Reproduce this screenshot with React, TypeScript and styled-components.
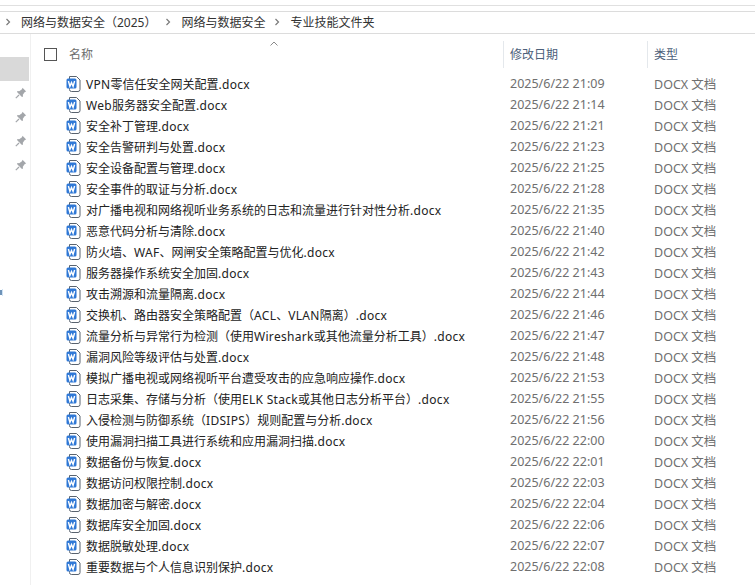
import styled, { createGlobalStyle } from 'styled-components';

const GlobalStyle = createGlobalStyle`
  html, body {
    margin: 0;
    padding: 0;
    background: #fff;
  }
  body {
    width: 755px;
    height: 585px;
    overflow: hidden;
    font-family: "Noto Sans", "Noto Sans CJK SC", sans-serif;
  }
`;

const Window = styled.div`
  width: 755px;
  height: 585px;
  display: flex;
  flex-direction: column;
  overflow: hidden;
  background: #fff;
`;

const TopStrip = styled.div`
  height: 5px;
  border-bottom: 1px solid #e0e0e0;
`;

const Gap = styled.div`
  height: 5px;
`;

const AddressBar = styled.div`
  height: 19px;
  border-top: 1px solid #dcdcdc;
  border-bottom: 1px solid #dcdcdc;
  display: flex;
  align-items: center;
  padding: 0 0 2px 5px;
  font-size: 12px;
  color: #333;
`;

const Crumb = styled.span<{ $gap: number }>`
  margin-left: ${(p) => p.$gap}px;
  white-space: nowrap;
`;

const Chevron = styled.svg<{ $gap: number }>`
  width: 6px;
  height: 8px;
  margin-left: ${(p) => p.$gap}px;
  flex: none;
`;

const Body = styled.div`
  flex: 1;
  display: flex;
  min-height: 0;
`;

const Sidebar = styled.div`
  position: relative;
  width: 31px;
  flex: none;
  border-right: 1px solid #f0f0f0;
  padding-top: 23px;
  display: flex;
  flex-direction: column;
  align-items: flex-end;
  box-sizing: border-box;
`;

const Selected = styled.div`
  width: 29px;
  height: 24px;
  margin-right: 1px;
  background: #d9d9d9;
  flex: none;
`;

const PinList = styled.div`
  display: flex;
  flex-direction: column;
  gap: 12px;
  margin-right: 3px;
  margin-top: 6px;
`;

const PinIcon = styled.svg`
  width: 12px;
  height: 12px;
  display: block;
`;

const EdgeIcon = styled.svg`
  position: absolute;
  left: 0;
  top: 255px;
  width: 4px;
  height: 8px;
`;

const Main = styled.div`
  flex: 1;
  min-width: 0;
  position: relative;
`;

const SortArrow = styled.svg`
  position: absolute;
  left: 239px;
  top: 7px;
  width: 8px;
  height: 5px;
`;

const HeaderRow = styled.div`
  height: 34px;
  display: grid;
  grid-template-columns: 472px 144px 1fr;
  align-items: stretch;
  padding-top: 7px;
  box-sizing: border-box;
  font-size: 12px;
  color: #4c607a;
`;

const NameHead = styled.div`
  display: flex;
  align-items: center;
  padding-left: 13px;
  margin-bottom: 1px;
  color: #6d6d6d;
`;

const Checkbox = styled.span`
  width: 11px;
  height: 11px;
  border: 1px solid #555;
  margin-right: 12px;
  flex: none;
`;

const ColumnHead = styled.div`
  display: flex;
  align-items: center;
  border-left: 1px solid #e4e8ec;
  padding: 0 0 2px 6px;
`;

const FileList = styled.div`
  padding-top: 5px;
`;

const Row = styled.div`
  height: 21px;
  display: grid;
  grid-template-columns: 472px 144px 1fr;
  align-items: center;
`;

const NameCell = styled.div`
  display: flex;
  align-items: center;
  padding-left: 35px;
  font-size: 12px;
  color: #222;
  white-space: nowrap;
`;

const WordSvg = styled.svg`
  flex: none;
  width: 15px;
  height: 16px;
`;

const FileName = styled.span`
  margin-left: 5px;
`;

const LatinRun = styled.span`
  letter-spacing: 0.3px;
`;

const DetailCell = styled.div`
  padding-left: 7px;
  font-size: 12.5px;
  color: #6f6f6f;
  white-space: nowrap;
`;

const files: [string, string][] = [
  ['VPN零信任安全网关配置.docx', '21:09'],
  ['Web服务器安全配置.docx', '21:14'],
  ['安全补丁管理.docx', '21:21'],
  ['安全告警研判与处置.docx', '21:23'],
  ['安全设备配置与管理.docx', '21:25'],
  ['安全事件的取证与分析.docx', '21:28'],
  ['对广播电视和网络视听业务系统的日志和流量进行针对性分析.docx', '21:35'],
  ['恶意代码分析与清除.docx', '21:40'],
  ['防火墙、WAF、网闸安全策略配置与优化.docx', '21:42'],
  ['服务器操作系统安全加固.docx', '21:43'],
  ['攻击溯源和流量隔离.docx', '21:44'],
  ['交换机、路由器安全策略配置（ACL、VLAN隔离）.docx', '21:46'],
  ['流量分析与异常行为检测（使用Wireshark或其他流量分析工具）.docx', '21:47'],
  ['漏洞风险等级评估与处置.docx', '21:48'],
  ['模拟广播电视或网络视听平台遭受攻击的应急响应操作.docx', '21:53'],
  ['日志采集、存储与分析（使用ELK Stack或其他日志分析平台）.docx', '21:55'],
  ['入侵检测与防御系统（IDSIPS）规则配置与分析.docx', '21:56'],
  ['使用漏洞扫描工具进行系统和应用漏洞扫描.docx', '22:00'],
  ['数据备份与恢复.docx', '22:01'],
  ['数据访问权限控制.docx', '22:03'],
  ['数据加密与解密.docx', '22:04'],
  ['数据库安全加固.docx', '22:06'],
  ['数据脱敏处理.docx', '22:07'],
  ['重要数据与个人信息识别保护.docx', '22:08'],
];

// latin runs come out a little narrow next to the CJK glyphs, so they get their own span
const renderName = (name: string) =>
  name.split(/([A-Za-z. ]+)/).map((part, i) =>
    i % 2 === 1 ? <LatinRun key={i}>{part}</LatinRun> : part,
  );

const WordIcon = () => (
  <WordSvg viewBox="0 0 15 16">
    <path d="M3.5 .5H10.5L14 4V13.5a2 2 0 0 1-2 2H5.500a2 2 0 0 1-2-2Z" fill="#fff" stroke="#59636f" />
    <rect x="0.500" y="2.500" width="10" height="10" rx="1.500" fill="#2f78d6" />
    <path d="M2.400 5L3.900 10.300L5.500 6.600L7.100 10.300L8.600 5" fill="none" stroke="#fff" strokeWidth="1.400" />
  </WordSvg>
);

const Pin = () => (
  <PinIcon viewBox="0 0 12 12">
    <path d="M7.500 .8L11.200 4.500L9.800 5L7.800 7.800L8 9.500L7 10L2 5L2.500 4L4.200 4.200L7 2.200Z" fill="#a3a6aa" />
    <path d="M4 8L.8 11.200" stroke="#a3a6aa" strokeWidth="1.200" />
  </PinIcon>
);

const Arrow = ({ gap }: { gap: number }) => (
  <Chevron $gap={gap} viewBox="0 0 6 8">
    <path d="M1.500 1L4.500 4L1.500 7" fill="none" stroke="#7a7a7a" strokeWidth="1.200" />
  </Chevron>
);

const App = () => (
  <Window>
    <GlobalStyle />
    <TopStrip />
    <Gap />
    <AddressBar>
      <Arrow gap={0} />
      <Crumb $gap={10}>网络与数据安全（2025）</Crumb>
      <Arrow gap={9} />
      <Crumb $gap={10}>网络与数据安全</Crumb>
      <Arrow gap={9} />
      <Crumb $gap={10}>专业技能文件夹</Crumb>
    </AddressBar>
    <Body>
      <Sidebar>
        <Selected />
        <PinList>
          <Pin />
          <Pin />
          <Pin />
          <Pin />
        </PinList>
        <EdgeIcon viewBox="0 0 4 8">
          <rect x="0" y="1" width="2" height="5" fill="#6f93b8" />
          <rect x="2" y="0" width="1" height="7" fill="#cfe3f5" />
        </EdgeIcon>
      </Sidebar>
      <Main>
        <SortArrow viewBox="0 0 8 5">
          <path d="M.5 4.500L4 1L7.500 4.500" fill="none" stroke="#8a8a8a" />
        </SortArrow>
        <HeaderRow>
          <NameHead>
            <Checkbox />
            名称
          </NameHead>
          <ColumnHead>修改日期</ColumnHead>
          <ColumnHead>类型</ColumnHead>
        </HeaderRow>
        <FileList>
          {files.map(([name, time]) => (
            <Row key={name}>
              <NameCell>
                <WordIcon />
                <FileName>{renderName(name)}</FileName>
              </NameCell>
              <DetailCell>2025/6/22 {time}</DetailCell>
              <DetailCell>DOCX 文档</DetailCell>
            </Row>
          ))}
        </FileList>
      </Main>
    </Body>
  </Window>
);

export default App;
